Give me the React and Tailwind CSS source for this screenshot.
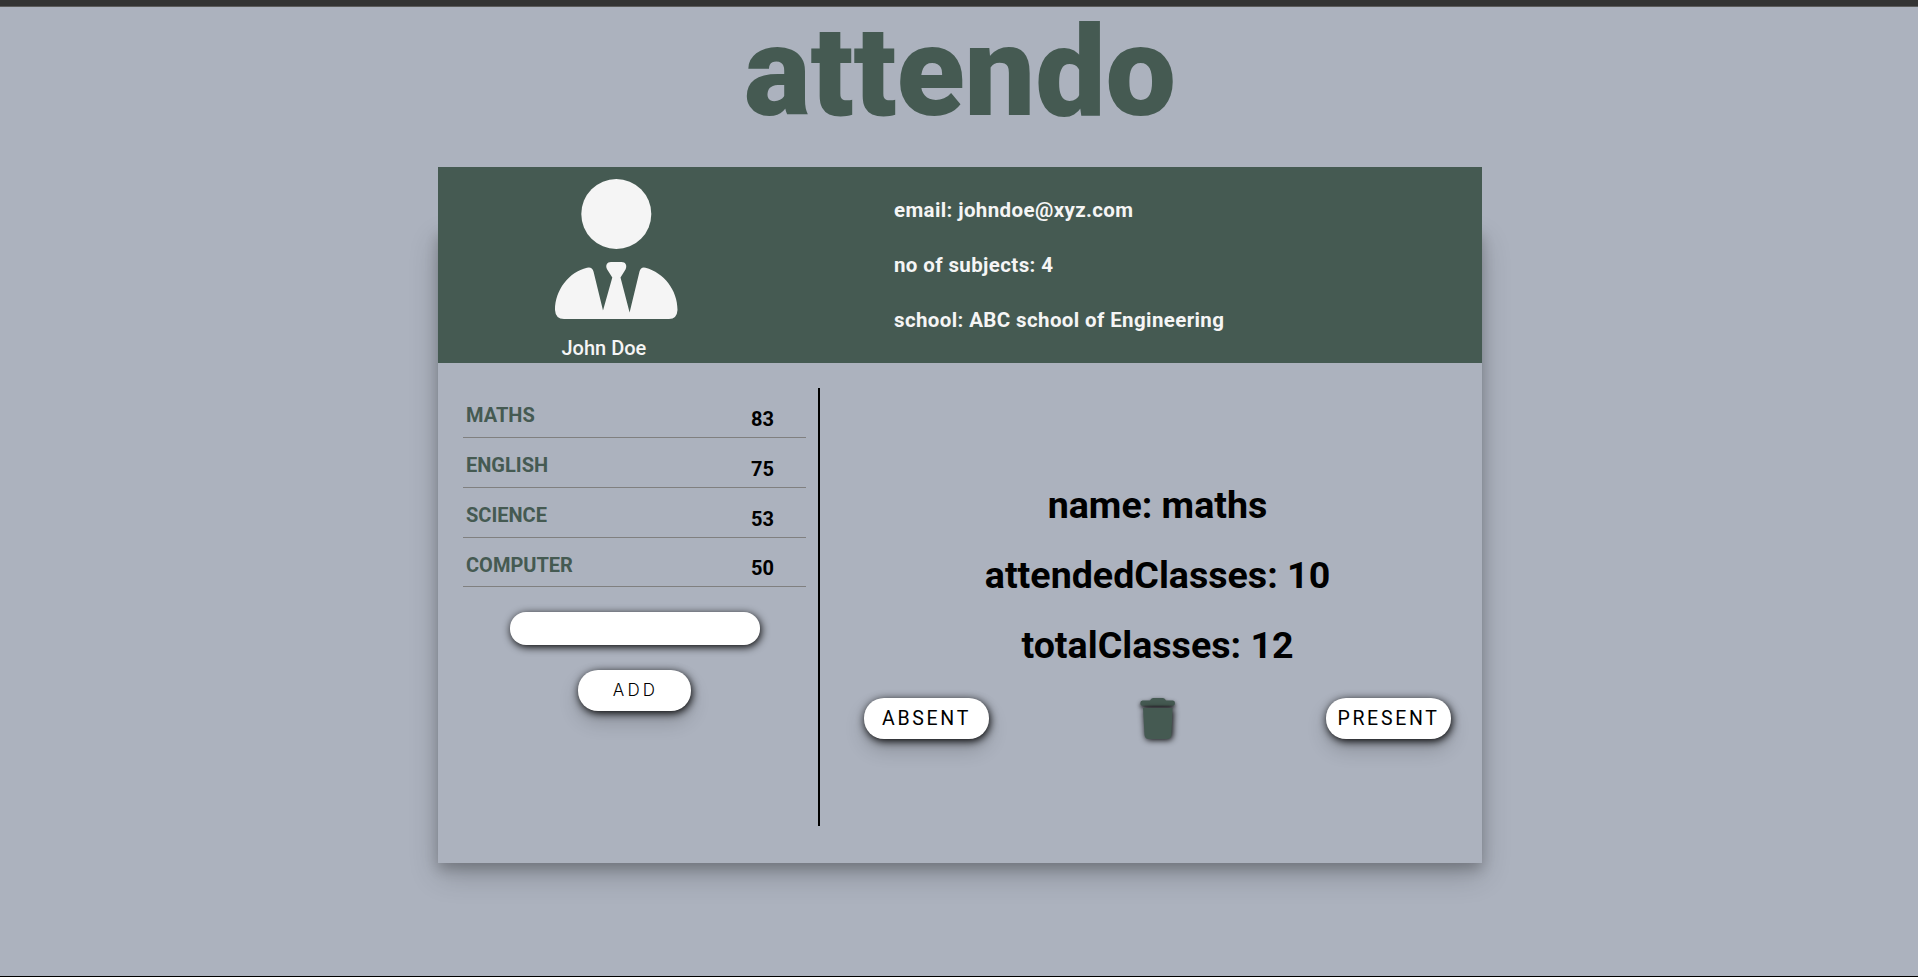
const subjects = [
  { name: "MATHS", percent: 83, row: "h-[50px]", drop: "pt-1" },
  { name: "ENGLISH", percent: 75, row: "h-[50px]", drop: "pt-1" },
  { name: "SCIENCE", percent: 53, row: "h-[50px]", drop: "pt-1" },
  { name: "COMPUTER", percent: 50, row: "h-[49px]", drop: "pt-[3px]" },
];

const details = [
  "email: johndoe@xyz.com",
  "no of subjects: 4",
  "school: ABC school of Engineering",
];

const stats = ["name: maths", "attendedClasses: 10", "totalClasses: 12"];

const buttonBase =
  "h-[41px] rounded-[20px] bg-white shadow-[1px_2px_8px_rgba(0,0,0,1),0_10px_20px_rgba(0,0,0,0.2)]";

function Avatar() {
  return (
    <svg className="mt-3 ml-[117px] h-[140px] w-[123px] fill-[#f5f5f5]" viewBox="0 0 123 140">
      <circle cx="61.3" cy="35" r="35" />
      <path d="M0 131C0 111 14 93 32 88.8Q37 87.5 38.5 92.5L48 131.5L57.3 98.5L52.2 90.5C50 86.5 52 83 56 83H66.5C70.5 83 72.5 86.5 70.5 90.5L65.5 98.5L74.6 133.5L84.5 92.5Q86 87.5 90.5 88.8C109 94 122.5 111 122.5 131Q122 140 114 140H9Q.5 140 0 131Z" />
    </svg>
  );
}

function Trash() {
  return (
    <svg className="h-[42px] w-[36px] overflow-visible fill-[#455a52]" viewBox="0 0 36 42">
      <path
        className="[filter:drop-shadow(0px_2px_2px_rgba(0,0,0,0.9))]"
        d="M2.5 2.5H10Q11 0 13 0H23Q25 0 26 2.5H33Q35 2.5 35 5Q35 7.7 33 7.7H2.5Q.3 7.7 .3 5Q.3 2.5 2.5 2.5Z"
      />
      <path
        className="[filter:drop-shadow(1px_1px_3px_rgba(0,0,0,1))]"
        d="M3 10H32.5L31.5 37Q31 41 27 41H8.5Q5 41 4.5 37Z"
      />
    </svg>
  );
}

export default function App() {
  return (
    <div className="flex h-[977px] flex-col items-center border-b border-black bg-[#acb2be] font-[Roboto,sans-serif] text-black">
      <div className="h-[7px] w-full shrink-0 border-b border-[#5c5c5c] bg-[#343434]" />
      <h1 className="h-40 pl-0.5 text-[125.4px] leading-[131px] font-black tracking-[-0.15px] text-[#455a52]">
        attendo
      </h1>

      <main className="ml-0.5 w-[1044px]">
        <header className="relative z-10 flex h-[196px] bg-[#455a52] text-[#f5f5f5]">
          <div className="w-[456px]">
            <Avatar />
            <p className="mt-[17px] ml-[123.5px] text-xl leading-6 font-medium">John Doe</p>
          </div>
          <div className="pt-4">
            {details.map((line) => (
              <p key={line} className="text-[20.5px] leading-[55px] font-bold tracking-[0.38px]">
                {line}
              </p>
            ))}
          </div>
        </header>

        <section className="-mt-[134px] flex h-[634px] pt-[159px] shadow-[0_12px_28px_rgba(0,0,0,0.2),0_6px_12px_rgba(0,0,0,0.2)]">
          <div className="flex h-[438px] w-[382px] flex-col items-center border-r-2 border-black pr-3 pl-[25px]">
            <ul className="w-full">
              {subjects.map((s) => (
                <li
                  key={s.name}
                  className={`flex justify-between border-b border-[#808080] pr-8 pl-[3px] text-xl leading-[54px] font-bold ${s.row}`}
                >
                  <span className="text-[#455a52]">{s.name}</span>
                  <span className={s.drop}>{s.percent}</span>
                </li>
              ))}
            </ul>
            <input
              className="mt-[25px] h-[33px] w-[250px] rounded-[16px] bg-white px-4 shadow-[1px_2px_8px_rgba(0,0,0,1)] outline-none"
              aria-label="subject"
            />
            <button
              className={`mt-[25px] w-[113px] pb-px pl-0.5 font-[Inter,sans-serif] text-[17px] leading-5 font-light tracking-[3.2px] ${buttonBase}`}
            >
              ADD
            </button>
          </div>

          <div className="flex-1 pt-[82px] pr-[31px] pl-[44px]">
            {stats.map((line) => (
              <p key={line} className="text-center text-[37.6px] leading-[70px] font-bold">
                {line}
              </p>
            ))}
            <div className="mt-[18px] flex justify-between">
              <button className={`w-[125px] text-[19.5px] tracking-[2.7px] ${buttonBase}`}>
                ABSENT
              </button>
              <Trash />
              <button className={`w-[125px] text-[19.5px] tracking-[2.7px] ${buttonBase}`}>
                PRESENT
              </button>
            </div>
          </div>
        </section>
      </main>
    </div>
  );
}
